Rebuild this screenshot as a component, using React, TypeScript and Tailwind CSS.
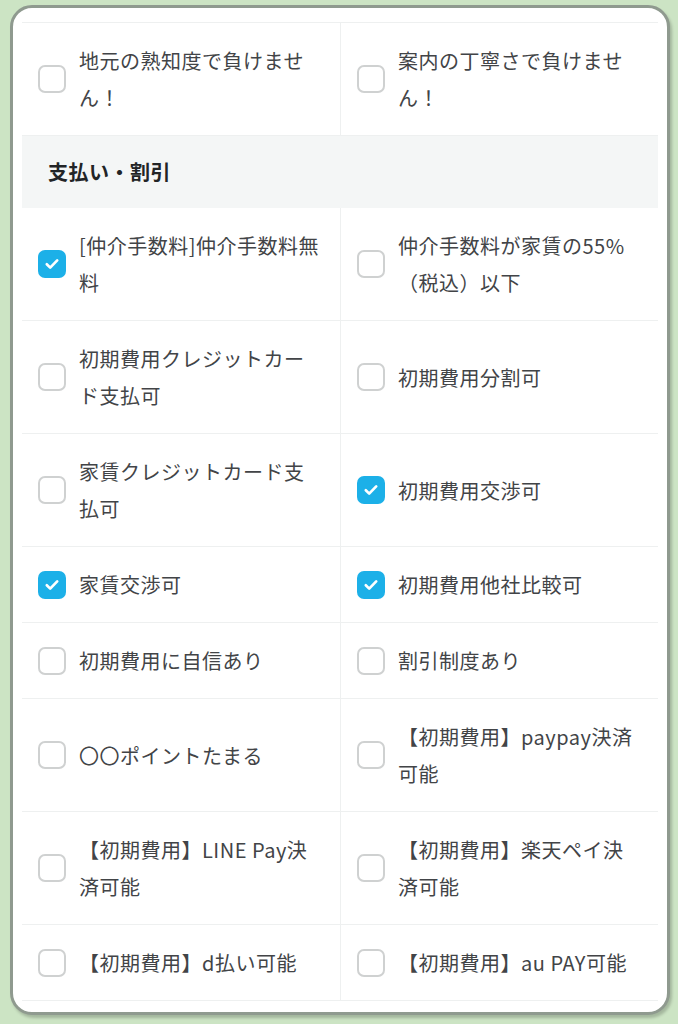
import React from 'react';

interface Option {
  label: string;
  checked?: boolean;
}

const topRow: Option[] = [
  { label: '地元の熟知度で負けません！' },
  { label: '案内の丁寧さで負けません！' },
];

const paymentRows: Option[][] = [
  [{ label: '[仲介手数料]仲介手数料無料', checked: true }, { label: '仲介手数料が家賃の55%（税込）以下' }],
  [{ label: '初期費用クレジットカード支払可' }, { label: '初期費用分割可' }],
  [{ label: '家賃クレジットカード支払可' }, { label: '初期費用交渉可', checked: true }],
  [{ label: '家賃交渉可', checked: true }, { label: '初期費用他社比較可', checked: true }],
  [{ label: '初期費用に自信あり' }, { label: '割引制度あり' }],
  [{ label: '〇〇ポイントたまる' }, { label: '【初期費用】paypay決済可能' }],
  [{ label: '【初期費用】LINE Pay決済可能' }, { label: '【初期費用】楽天ペイ決済可能' }],
  [{ label: '【初期費用】d払い可能' }, { label: '【初期費用】au PAY可能' }],
];

const Checkbox: React.FC<{ checked?: boolean }> = ({ checked }) =>
  checked ? (
    <span className="flex h-[28px] w-[28px] shrink-0 items-center justify-center rounded-[7px] bg-[#1cb0e8]">
      <svg width="18" height="18" viewBox="0 0 18 18" fill="none">
        <path d="M3.8 9.3l3.4 3.3 7-7.2" stroke="#fff" strokeWidth="2.7" strokeLinecap="round" strokeLinejoin="round" />
      </svg>
    </span>
  ) : (
    <span className="h-[28px] w-[28px] shrink-0 rounded-[7px] border-2 border-[#cfd1d1] bg-white" />
  );

const Cell: React.FC<{ option: Option; left?: boolean }> = ({ option, left }) => (
  <label
    className={`flex items-center gap-[13px] py-[19px] pl-4 pr-[18px] ${left ? 'border-r border-[#eef0f0]' : ''}`}
  >
    <Checkbox checked={option.checked} />
    <span className="text-[20px] leading-[37px] tracking-[0.5px] text-[#424447]">{option.label}</span>
  </label>
);

const Row: React.FC<{ options: Option[] }> = ({ options }) => (
  <div className="grid grid-cols-[319px_1fr] border-b border-[#eef0f0]">
    <Cell option={options[0]} left />
    <Cell option={options[1]} />
  </div>
);

export default function App() {
  return (
    <div
      className="min-h-screen bg-[#cce4c4] pl-[10px] pt-[5px]"
      style={{ fontFamily: '"Noto Sans CJK JP", "Noto Sans", sans-serif' }}
    >
      <div className="h-[1010px] w-[660px] rounded-[22px] border-[3px] border-[#8f9a8f] bg-white px-[9px] pt-[14px] shadow-[2px_3px_3px_rgba(0,0,0,0.2)]">
        <div className="border-t border-[#eef0f0]">
          <Row options={topRow} />
          <div className="flex h-[72px] items-center bg-[#f4f6f6] pl-[26px]">
            <h3 className="text-[20px] font-bold tracking-[0.5px] text-[#222426]">支払い・割引</h3>
          </div>
          {paymentRows.map((row, i) => (
            <Row key={i} options={row} />
          ))}
        </div>
      </div>
    </div>
  );
}
